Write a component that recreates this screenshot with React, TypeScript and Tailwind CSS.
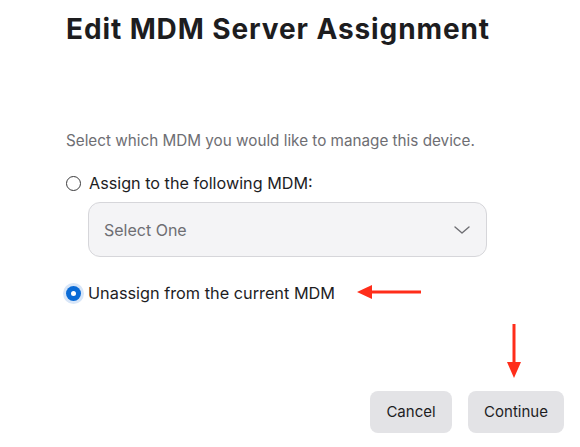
import React from "react";

export default function App() {
  return (
    <div
      className="relative w-[580px] h-[447px] bg-white overflow-hidden"
      style={{ fontFamily: "Inter, 'Noto Sans', sans-serif" }}
    >
      <div className="pl-[66px] pt-[12px] flex flex-col">
        <h1 className="text-[28px] leading-[34px] font-bold text-[#1d1d1f] tracking-[0.9px]">
          Edit MDM Server Assignment
        </h1>
        <p className="mt-[83px] text-[15.25px] leading-[24px] text-[#6e6e73]">
          Select which MDM you would like to manage this device.
        </p>
        <label className="mt-[18px] flex items-center gap-[8px] h-[24px]">
          <span className="w-[15px] h-[15px] rounded-full border border-[#3a3a3c] bg-white shrink-0" />
          <span className="text-[16.2px] leading-[24px] text-[#1d1d1f]">
            Assign to the following MDM:
          </span>
        </label>
        <div className="ml-[22px] mt-[7px] w-[399px] h-[55px] rounded-[12px] border border-[#d6d6da] bg-[#f4f4f6] flex items-center justify-between pl-[15px] pr-[16px]">
          <span className="text-[16px] text-[#6e6e73]">Select One</span>
          <svg width="16" height="8" viewBox="0 0 16 8" fill="none">
            <path d="M1 1 L8 7 L15 1" stroke="#6e6e73" strokeWidth="1.4" strokeLinecap="round" strokeLinejoin="round" />
          </svg>
        </div>
        <label className="mt-[24px] flex items-center gap-[4px] h-[24px] -ml-[3px]">
          <span className="w-[21px] h-[21px] rounded-full bg-[#d8e6f8] flex items-center justify-center shrink-0">
            <span className="w-[15px] h-[15px] rounded-full bg-[#0a6bd6] flex items-center justify-center">
              <span className="w-[5px] h-[5px] rounded-full bg-white" />
            </span>
          </span>
          <span className="text-[16.3px] leading-[24px] text-[#1d1d1f]">
            Unassign from the current MDM
          </span>
        </label>
      </div>

      <div className="absolute left-[370px] top-[391px] flex gap-[16px]">
        <button className="w-[82px] h-[42px] rounded-[8px] bg-[#e3e3e6] text-[15px] text-[#1d1d1f]">
          Cancel
        </button>
        <button className="w-[96px] h-[42px] rounded-[8px] bg-[#e3e3e6] text-[15px] text-[#1d1d1f]">
          Continue
        </button>
      </div>

      <svg className="absolute left-[355px] top-[282px]" width="70" height="20" viewBox="0 0 70 20">
        <line x1="14" y1="10" x2="66" y2="10" stroke="#ff2d1a" strokeWidth="3" />
        <polygon points="2,10 17,3 17,17" fill="#ff2d1a" />
      </svg>
      <svg className="absolute left-[504px] top-[322px]" width="20" height="58" viewBox="0 0 20 58">
        <line x1="10" y1="2" x2="10" y2="42" stroke="#ff2d1a" strokeWidth="3" />
        <polygon points="10,56 3,40 17,40" fill="#ff2d1a" />
      </svg>
    </div>
  );
}
